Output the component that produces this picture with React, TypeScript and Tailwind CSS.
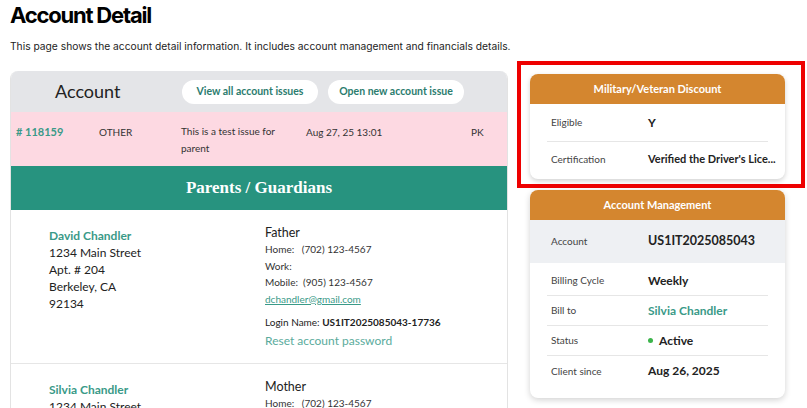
import React from 'react';

const body = { fontFamily: 'Lato, "Open Sans", sans-serif' };

function InfoRow({ label, value, shade, last, valueClass }: { label: string; value: React.ReactNode; shade?: boolean; last?: boolean; valueClass?: string }) {
  return (
    <div className={shade ? 'bg-[#eef0f3] px-[17px]' : 'px-[17px]'}>
      <div className={`flex items-center ${shade ? 'h-[43px]' : 'h-[30px]'} ${last || shade ? '' : 'border-b border-[#e6e6e6]'}`}>
        <div className="w-[101px] shrink-0 pl-[4px] text-[10px] text-[#444]">{label}</div>
        <div className={valueClass ?? 'text-[12px] font-bold text-[#222]'}>{value}</div>
      </div>
    </div>
  );
}

function Guardian({ name, role, lines, home, mobile, email, login, withLogin }: { name: string; role: string; lines: string[]; home: string; mobile?: string; email?: string; login?: string; withLogin?: boolean }) {
  return (
    <div className="flex pl-[38px] pt-[15px] pb-[14px]">
      <div className="w-[216px] pt-[2px]">
        <div className="text-[12px] font-bold text-[#3a9a88] leading-[17px]">{name}</div>
        {lines.map((l) => (
          <div key={l} className="text-[12px] text-[#222] leading-[17px]">{l}</div>
        ))}
      </div>
      <div>
        <div className="text-[12.5px] text-[#222] leading-[16px]">{role}</div>
        <div className="text-[10px] text-[#333] leading-[16.5px]">Home:&nbsp;&nbsp;&nbsp;{home}</div>
        {withLogin && (
          <>
            <div className="text-[10px] text-[#333] leading-[16.5px]">Work:</div>
            <div className="text-[10px] text-[#333] leading-[16.5px]">Mobile:&nbsp;&nbsp;{mobile}</div>
            <div className="text-[10px] text-[#3a9a88] underline leading-[16.5px]">{email}</div>
            <div className="mt-[7px] text-[10px] text-[#222] leading-[17px]">
              Login Name: <span className="font-bold">{login}</span>
            </div>
            <div className="mt-[1px] text-[12px] text-[#5aab9c] leading-[17px]">Reset account password</div>
          </>
        )}
      </div>
    </div>
  );
}

export default function App() {
  return (
    <div className="w-[807px] h-[408px] overflow-hidden bg-white pl-[10px]" style={body}>
      <h1 className="pt-[1px] text-[22px] font-bold tracking-[-1.2px] text-black leading-[28px]" style={{ fontFamily: 'Inter, "Liberation Sans", sans-serif' }}>
        Account Detail
      </h1>
      <p className="mt-[10px] text-[10.25px] text-[#222] leading-[14px]" style={{ fontFamily: 'Inter, "Liberation Sans", sans-serif' }}>
        This page shows the account detail information. It includes account management and financials details.
      </p>

      <div className="mt-[8px] flex gap-[9px]">
        <div className="mt-[10px] w-[498px] shrink-0 rounded-t-[8px] border-x border-[#e3e3e3] overflow-hidden">
          <div className="flex h-[41px] items-center bg-[#e4e5e8]">
            <div className="w-[171px] pl-[44px] text-[18px] text-[#222]">Account</div>
            <div className="flex gap-[10px]">
              <button className="h-[24px] w-[136px] rounded-full bg-white text-[10.5px] font-bold text-[#2b7c6e]">View all account issues</button>
              <button className="h-[24px] w-[136px] rounded-full bg-white text-[10.5px] font-bold text-[#2b7c6e]">Open new account issue</button>
            </div>
          </div>

          <div className="flex h-[54px] bg-[#fdd9e2] pt-[13px] pl-[5px] text-[10px] text-[#333]">
            <div className="w-[83px] text-[11px] font-bold text-[#3a9a88] leading-[14px]">#&nbsp;118159</div>
            <div className="w-[82px] leading-[14px]">OTHER</div>
            <div className="w-[125px] leading-[17px] -mt-[2px]">This is a test issue for<br />parent</div>
            <div className="w-[165px] leading-[14px]">Aug 27, 25 13:01</div>
            <div className="leading-[14px]">PK</div>
          </div>

          <div className="flex h-[44px] items-center justify-center bg-[#27937f] text-[17px] font-bold text-white" style={{ fontFamily: '"Liberation Serif", "DejaVu Serif", serif' }}>
            Parents / Guardians
          </div>

          <div className="border-b border-[#e6e6e6]">
            <Guardian
              name="David Chandler"
              role="Father"
              lines={['1234 Main Street', 'Apt. # 204', 'Berkeley, CA', '92134']}
              home="(702) 123-4567"
              mobile="(905) 123-4567"
              email="dchandler@gmail.com"
              login="US1IT2025085043-17736"
              withLogin
            />
          </div>
          <Guardian name="Silvia Chandler" role="Mother" lines={['1234 Main Street']} home="(702) 123-4567" />
        </div>

        <div className="w-[288px] shrink-0">
          <div className="h-[127px] border-[4px] border-[#ee0000] pl-[9px] pr-[16px] pt-[9px]">
            <div className="overflow-hidden rounded-[8px] bg-white shadow-[0_2px_5px_rgba(0,0,0,0.18)]">
              <div className="flex h-[30px] items-center justify-center bg-[#d4862f] text-[11px] font-bold text-white">Military/Veteran Discount</div>
              <div className="pb-[3px]">
                <div className="px-[17px]">
                  <div className="flex h-[38px] items-center border-b border-[#e6e6e6]">
                    <div className="w-[101px] shrink-0 pl-[4px] text-[10px] text-[#444]">Eligible</div>
                    <div className="text-[12px] font-bold text-[#222]">Y</div>
                  </div>
                  <div className="-mr-[15px] flex h-[34px] items-center">
                    <div className="w-[101px] shrink-0 pl-[4px] text-[10px] text-[#444]">Certification</div>
                    <div className="whitespace-nowrap text-[11px] font-bold text-[#222]">Verified the Driver's Lice...</div>
                  </div>
                </div>
              </div>
            </div>
          </div>

          <div className="mt-[2px] ml-[13px] w-[255px] overflow-hidden rounded-[8px] bg-white shadow-[0_2px_6px_rgba(0,0,0,0.18)]">
            <div className="flex h-[30px] items-center justify-center bg-[#d4862f] text-[11px] font-bold text-white">Account Management</div>
            <InfoRow label="Account" value="US1IT2025085043" shade valueClass="text-[12.5px] font-bold text-[#222]" />
            <div className="pt-[3px]">
              <InfoRow label="Billing Cycle" value="Weekly" />
              <InfoRow label="Bill to" value="Silvia Chandler" valueClass="text-[12px] font-bold text-[#3a9a88]" />
              <InfoRow
                label="Status"
                value={
                  <span className="flex items-center gap-[6px]">
                    <span className="h-[5px] w-[5px] rounded-full bg-[#3cb44b]" />
                    Active
                  </span>
                }
              />
              <InfoRow label="Client since" value="Aug 26, 2025" last />
            </div>
            <div className="h-[12px]" />
          </div>
        </div>
      </div>
    </div>
  );
}
